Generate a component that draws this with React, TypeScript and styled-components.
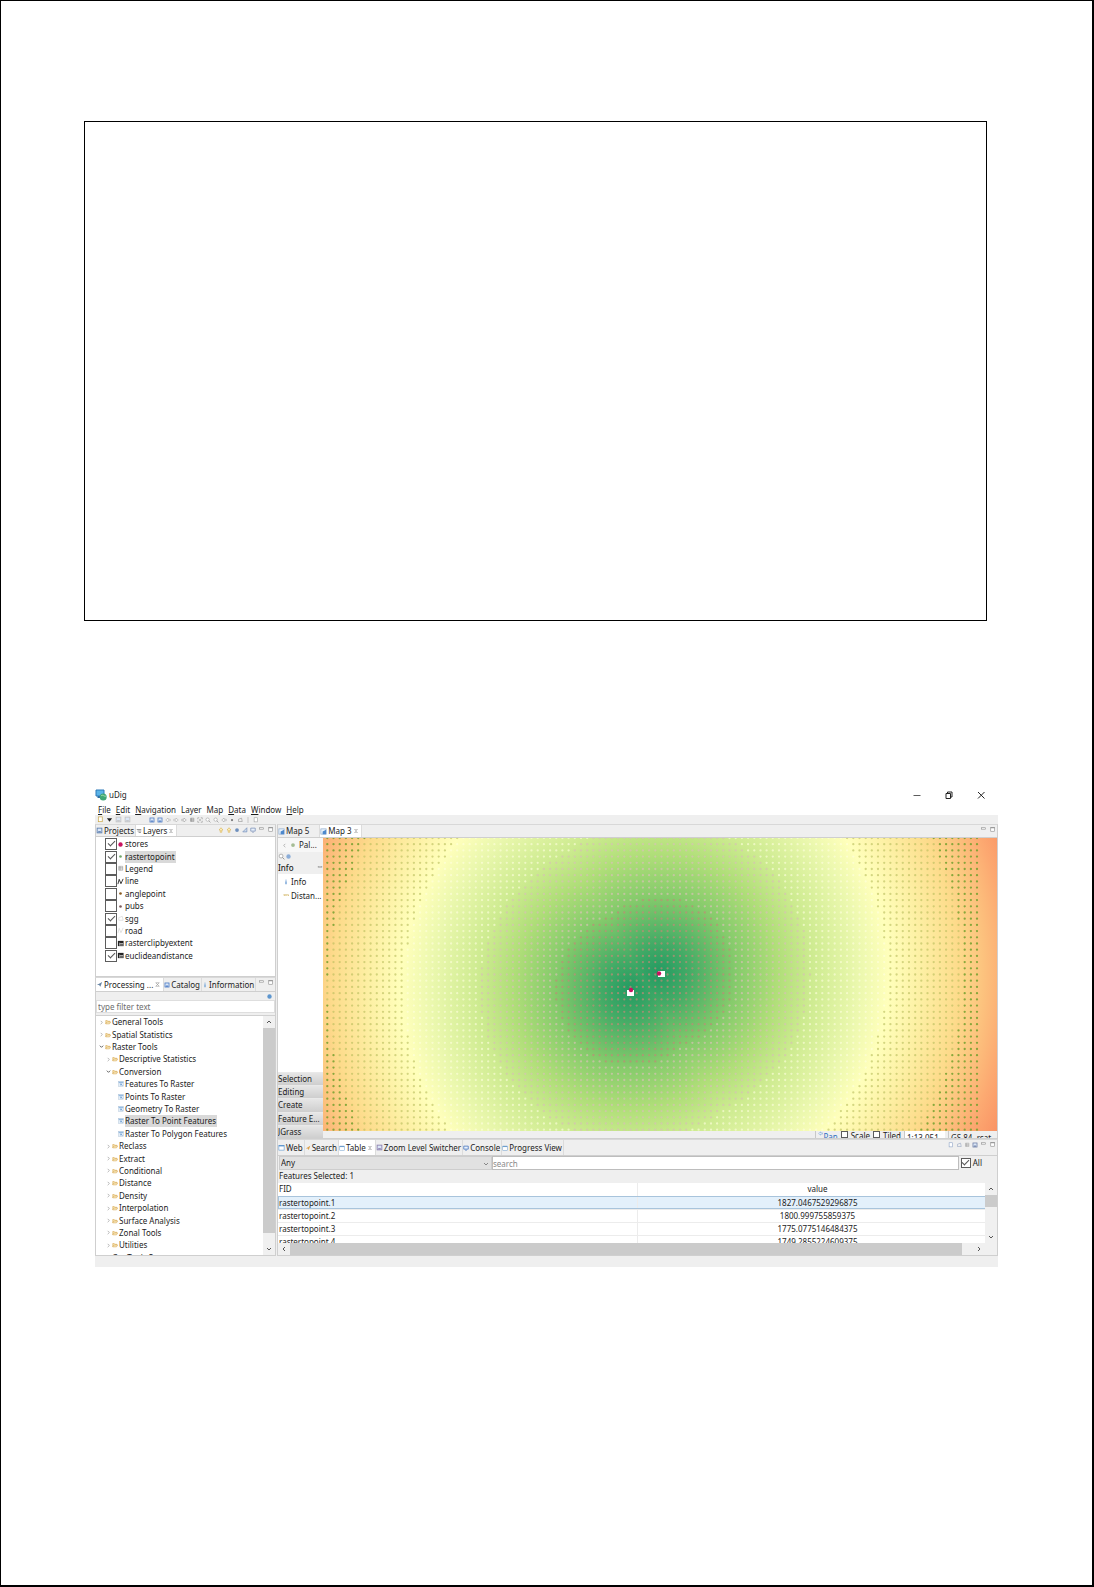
import React from "react";
import styled, { createGlobalStyle, css } from "styled-components";

const GlobalStyle = createGlobalStyle`
  *, *::before, *::after { box-sizing: border-box; }
  body { margin: 0; background: #fff; }
  body, button, input, select, table {
    font-family: "Noto Sans", "Open Sans", sans-serif;
    font-size: 8px;
    line-height: 12px;
    color: #1c1c1c;
  }
  button { padding: 0; border: 0; background: none; text-align: left; }
  ul { margin: 0; padding: 0; list-style: none; }
`;

const line = "#cfcfcf";
const chrome = "#efefef";

/* ---------- page ---------- */

const Sheet = styled.main`
  min-height: 100vh;
  padding: 120px 94px 60px;
  border: solid #000;
  border-width: 1px 2px 2px 1px;
  background: #fff;
`;

const EmptyBox = styled.section`
  height: 500px;
  margin: 0 11px 164px -11px;
  border: 1px solid #000;
`;

const Window = styled.section`
  display: flex;
  flex-direction: column;
`;

const TitleBar = styled.header`
  display: flex;
  align-items: center;
  height: 19px;
  gap: 2px;
`;

const WindowButtons = styled.div`
  display: flex;
  gap: 24px;
  margin-left: auto;
  padding-right: 13px;
  button { display: flex; }
`;

const MenuBar = styled.nav`
  display: flex;
  align-items: center;
  gap: 5px;
  height: 11px;
  padding-left: 3px;
`;

const ToolBar = styled.div`
  display: flex;
  align-items: center;
  gap: 2px;
  height: 9px;
  padding-left: 2px;
  background: ${chrome};
`;

const ToolGap = styled.span`
  width: 14px;
`;

const Workbench = styled.div`
  display: grid;
  grid-template-columns: 181px minmax(0, 1fr);
  column-gap: 1px;
  background: ${chrome};
`;

const Column = styled.div`
  display: flex;
  flex-direction: column;
  min-width: 0;
`;

const Panel = styled.section<{ $height: number }>`
  display: flex;
  flex-direction: column;
  height: ${(p) => p.$height}px;
  border: 1px solid ${line};
  border-top-color: #d8d8d8;
  overflow: hidden;
`;

const TabStrip = styled.div<{ $height: number }>`
  display: flex;
  flex: none;
  height: ${(p) => p.$height}px;
  background: ${chrome};
  border-bottom: 1px solid ${line};
`;

const Tab = styled.button<{ $active?: boolean }>`
  display: flex;
  align-items: center;
  flex: none;
  gap: 1px;
  padding: 0 1px 0 0;
  white-space: nowrap;
  border-right: 1px solid #dcdcdc;
  ${(p) => p.$active && css`background: #fff; padding-right: 2px;`}
`;

const Actions = styled.div`
  display: flex;
  gap: 2px;
  height: 9px;
  align-items: center;
  margin-left: auto;
  padding-right: 1px;
`;

const StatusBar = styled.footer`
  height: 11px;
  background: ${chrome};
`;

/* ---------- layers ---------- */

const LayerList = styled.ul`
  display: grid;
  grid-auto-rows: 1fr;
  height: 124px;
`;

const LayerPane = styled.div`
  flex: 1;
  padding-top: 1px;
  background: #fff;
`;

const Layer = styled.li`
  display: flex;
  align-items: center;
  padding-left: 9px;
  label { display: flex; align-items: center; line-height: 12px; }
`;

const LayerName = styled.span<{ $selected?: boolean }>`
  padding-right: 1px;
  margin-left: 1px;
  background: ${(p) => (p.$selected ? "#d9d9d9" : "none")};
`;

const Check = styled.input<{ $size: number }>`
  appearance: none;
  flex: none;
  display: grid;
  place-items: center;
  width: ${(p) => p.$size}px;
  height: ${(p) => p.$size}px;
  margin: 0;
  border: 1px solid #5c5c5c;
  background: #fff;
  &:checked::after {
    content: "";
    width: 7px;
    height: 4px;
    border: solid #555;
    border-width: 0 0 1px 1px;
    transform: rotate(-45deg) translate(1px, -1px);
  }
`;

/* ---------- processing tree ---------- */

const FilterBar = styled.div`
  display: flex;
  flex: none;
  align-items: center;
  justify-content: flex-end;
  height: 8px;
  padding-right: 2px;
`;

const FilterInput = styled.input`
  flex: none;
  height: 13px;
  margin-bottom: 2px;
  padding: 0 1px;
  border: 1px solid #dedede;
  background: #fff;
  &::placeholder { color: #6d6d6d; }
`;

const TreePane = styled.div`
  display: flex;
  flex: 1;
  min-height: 0;
  border-top: 1px solid #d0d0d0;
  background: #fff;
`;

const TreeClip = styled.div`
  flex: 1;
  min-width: 0;
  overflow: hidden;
`;

const Tree = styled.ul`
  display: grid;
  grid-auto-rows: 1fr;
  height: 248px;
`;

const TreeRow = styled.li<{ $depth: number }>`
  display: flex;
  align-items: center;
  gap: 1px;
  padding-left: ${(p) => [3, 10, 22][p.$depth]}px;
  white-space: nowrap;
`;

const TreeLabel = styled.span<{ $selected?: boolean }>`
  padding-right: 1px;
  background: ${(p) => (p.$selected ? "#d9d9d9" : "none")};
`;

const Scrollbar = styled.div<{ $horizontal?: boolean }>`
  display: flex;
  flex: none;
  align-items: center;
  background: #f0f0f0;
  ${(p) =>
    p.$horizontal
      ? css`height: 12px; button { width: 12px; }`
      : css`flex-direction: column; width: 12px; button { height: 12px; }`}
  button { display: grid; place-items: center; flex: none; }
`;

const Thumb = styled.div<{ $length?: string }>`
  align-self: stretch;
  flex: ${(p) => (p.$length ? `0 0 ${p.$length}` : "1")};
  background: #cbcbcb;
`;

const Spacer = styled.div<{ $size?: string }>`
  flex: ${(p) => (p.$size ? `0 0 ${p.$size}` : "1")};
`;

/* ---------- editor ---------- */

const Editor = styled.div`
  display: grid;
  grid-template-columns: 45px minmax(0, 1fr);
  flex: 1;
  min-height: 0;
`;

const Palette = styled.aside`
  display: flex;
  flex-direction: column;
  min-width: 0;
  background: #fff;
  white-space: nowrap;
`;

const PaletteHead = styled.div`
  display: flex;
  align-items: center;
  gap: 3px;
  height: 14px;
  padding-left: 4px;
  background: #f7f7f7;
`;

const PaletteTools = styled.div`
  display: flex;
  align-items: center;
  height: 9px;
  background: ${chrome};
`;

const PaletteGroup = styled.button`
  display: flex;
  align-items: center;
  justify-content: space-between;
  height: 13px;
  margin-bottom: 1px;
  font-weight: 500;
  background: ${chrome};
`;

const PaletteItem = styled.button`
  display: flex;
  align-items: center;
  gap: 2px;
  height: 14px;
  padding-left: 5px;
`;

const Drawers = styled.div`
  display: grid;
  grid-auto-rows: 1fr;
  height: 66px;
  margin-top: auto;
  button {
    border-top: 1px solid #e9e9e9;
    background: linear-gradient(#e6e6e6, #cecece);
  }
`;

const MapColumn = styled.div`
  display: flex;
  flex-direction: column;
  min-width: 0;
`;

const MapSvg = styled.svg`
  display: block;
  width: 100%;
  height: 293px;
`;

const MapStatus = styled.div`
  display: flex;
  justify-content: flex-end;
  gap: 3px;
  height: 7px;
  overflow: hidden;
  background: ${chrome};
  white-space: nowrap;
  label { display: flex; gap: 3px; line-height: 9px; }
`;

const StatusCell = styled.span<{ $width: number; $white?: boolean }>`
  flex: none;
  width: ${(p) => p.$width}px;
  padding: 1px 2px 0;
  border-left: 1px solid #c8c8c8;
  background: ${(p) => (p.$white ? "#fff" : "none")};
  overflow: hidden;
`;

const PanLink = styled.a`
  display: flex;
  padding-left: 2px;
  border-left: 1px solid #c8c8c8;
  color: #2f6fc0;
  text-decoration: none;
`;

/* ---------- feature table ---------- */

const QueryRow = styled.div`
  display: flex;
  align-items: center;
  height: 14px;
  flex: none;
  padding-left: 1px;
  > label { display: flex; align-items: center; gap: 2px; padding: 0 15px 0 2px; }
`;

const SelectBox = styled.div`
  position: relative;
  flex: 0 1 213px;
  svg { position: absolute; right: 3px; top: 5px; }
  select {
    appearance: none;
    display: block;
    width: 100%;
    height: 14px;
    padding: 0 1px;
    border: 1px solid #cdcdcd;
    border-radius: 0;
    background: #e1e1e1;
  }
`;

const SearchInput = styled.input`
  flex: 1;
  min-width: 0;
  height: 14px;
  padding: 0;
  border: 1px solid #bdbdbd;
  background: #fff;
  &::placeholder { color: #8a8a8a; }
`;

const Selected = styled.p`
  flex: none;
  height: 13px;
  margin: 0;
  padding: 0 1px;
`;

const TableArea = styled.div`
  display: flex;
  flex: 1;
  min-height: 0;
`;

const TableClip = styled.div`
  flex: 1;
  min-width: 0;
  overflow: hidden;
  background: #fff;
`;

const FeatureTable = styled.table`
  width: calc(100% + 12px);
  table-layout: fixed;
  border-collapse: collapse;
  th, td {
    height: 13px;
    padding: 0 1px;
    line-height: 12px;
    font-weight: 400;
    text-align: center;
    border-bottom: 1px solid #ececec;
  }
  th:first-child, td:first-child { text-align: left; border-right: 1px solid #ececec; }
`;

const FeatureRow = styled.tr<{ $selected?: boolean }>`
  ${(p) =>
    p.$selected &&
    css`
      background: #e3f0fb;
      outline: 1px solid #a8c4dc;
      outline-offset: -1px;
    `}
`;

/* ---------- small drawings ---------- */

type GlyphKind =
  | "view" | "stack" | "map" | "close" | "min" | "max" | "left" | "right" | "zoom"
  | "folder" | "tool" | "dot" | "pin" | "grid" | "line" | "poly" | "raster" | "extent"
  | "save" | "page" | "down" | "info" | "ruler" | "flash" | "console" | "arrowUp" | "split" | "filter";

const shapes: Record<GlyphKind, (c: string) => React.ReactNode> = {
  view: (c) => <><rect x="1" y="1.5" width="6" height="5.5" fill="#fff" stroke={c} strokeWidth="0.7" /><path d="M1 2h6" stroke={c} strokeWidth="1.5" /></>,
  stack: (c) => <path d="M1 2h6M2 4h5M3.500 6h3" stroke={c} strokeWidth="1" />,
  map: (c) => <><rect x="1" y="1" width="6" height="6" fill="#eaf2fb" stroke="#8ba9cc" strokeWidth="0.8" /><path d="M3 7V4l4-2v5z" fill={c} /></>,
  close: (c) => <path d="M2 2l4 4M6 2L2 6M2 2h4M2 6h4" stroke={c} strokeWidth="0.6" />,
  min: (c) => <rect x="1.500" y="2" width="5" height="1.600" fill="#fff" stroke={c} strokeWidth="0.7" />,
  max: (c) => <><rect x="2" y="1.500" width="4.500" height="4.500" fill="#fff" stroke={c} strokeWidth="0.7" /><path d="M2 2h4.500" stroke={c} /></>,
  left: (c) => <path d="M1 4l3-2.500v1.500h3v2H4v1.500z" fill="#fff" stroke={c} strokeWidth="0.7" />,
  right: (c) => <path d="M7 4L4 1.500v1.500H1v2h3v1.500z" fill="#fff" stroke={c} strokeWidth="0.7" />,
  zoom: (c) => <><circle cx="3.500" cy="3.500" r="2.200" fill="#fff" stroke={c} strokeWidth="0.7" /><path d="M5 5l2.300 2.300" stroke={c} /></>,
  folder: (c) => <><path d="M1 6.500V2h2l1 1h2.500v1" fill="#f7e3ad" stroke={c} strokeWidth="0.7" /><path d="M1 6.500L2.500 4h5L6 6.500z" fill="#fbeec6" stroke={c} strokeWidth="0.7" /></>,
  tool: (c) => <><rect x="1" y="1" width="6" height="6" fill="#e4eef8" stroke="#a9bfd6" strokeWidth="0.6" /><path d="M1 1.700h6M2.500 3.500L6 6M3 5.500l2.500-2" stroke={c} strokeWidth="1" /></>,
  dot: (c) => <circle cx="4" cy="4" r="1.500" fill={c} />,
  pin: (c) => <circle cx="4" cy="4" r="2.500" fill={c} />,
  grid: (c) => <path d="M2 1.500h4.500v4.500H2zM2 3h4.500M2 4.500h4.500M3.500 1.500v4.500" fill="none" stroke={c} strokeWidth="0.5" />,
  line: (c) => <path d="M1 7L2.500 1.500 4.500 6.500 7 1" fill="none" stroke={c} strokeWidth="1" />,
  poly: (c) => <path d="M2 3l4-1.500 1 4.500H2z" fill="none" stroke={c} strokeWidth="0.6" />,
  raster: (c) => <><rect x="1" y="1" width="6.500" height="6" fill={c} /><path d="M3.500 4H7M3.500 5.700H7M3 3v3.500" stroke="#fff" strokeWidth="0.7" /></>,
  extent: (c) => <path d="M1 3V1h2M5 1h2v2M7 5v2H5M3 7H1V5M3 3l2 2M5 3L3 5" fill="none" stroke={c} strokeWidth="0.7" />,
  save: (c) => <><rect x="1.300" y="1.300" width="5.400" height="5.400" fill="#dbe7f7" stroke={c} strokeWidth="1" /><path d="M2.500 5.500h3" stroke={c} strokeWidth="1.500" /></>,
  page: (c) => <rect x="1.500" y="1" width="4.500" height="5.500" fill="#fff" stroke={c} strokeWidth="0.8" />,
  down: (c) => <path d="M1 2.500h6L4 6.500z" fill={c} />,
  info: (c) => <path d="M4 1v1M4 3v4" stroke={c} strokeWidth="1.500" />,
  ruler: (c) => <path d="M0.500 2.500h7v1.500M2 2.500v1M4 2.500v1" fill="none" stroke={c} strokeWidth="0.9" />,
  flash: (c) => <path d="M1 4.500L7 1 5 6.500 3.500 4.500z" fill={c} />,
  console: (c) => <path d="M1 1.500h6v4H1zM3 7h2" fill="#e8f0fb" stroke={c} strokeWidth="1" />,
  arrowUp: (c) => <path d="M4 1L1.500 4h1.500v3h2V4h1.500z" fill="#fff4c8" stroke={c} strokeWidth="0.8" />,
  split: (c) => <path d="M4 0v8" stroke={c} strokeWidth="0.6" />,
  filter: (c) => <path d="M1 6.500L6.500 1v5.500z" fill="#cfdcec" stroke={c} strokeWidth="0.8" />,
};

const GlyphSvg = styled.svg`
  display: block;
  flex: none;
`;

function Glyph({ kind, color = "#8c8c8c", size = 7 }: { kind: GlyphKind; color?: string; size?: number }) {
  return (
    <GlyphSvg width={size} height={size} viewBox="0 0 8 8" fill="none" aria-hidden="true">
      {shapes[kind](color)}
    </GlyphSvg>
  );
}

function Chevron({ turn = 0, color = "#555", size = 6 }: { turn?: number; color?: string; size?: number }) {
  return (
    <GlyphSvg width={size} height={size} viewBox="0 0 6 6" fill="none" aria-hidden="true">
      <path d="M1 4l2-2 2 2" stroke={color} strokeWidth="1" transform={`rotate(${turn} 3 3)`} />
    </GlyphSvg>
  );
}

/* ---------- data ---------- */

const menus: [string, boolean][] = [
  ["File", true], ["Edit", true], ["Navigation", true], ["Layer", false],
  ["Map", false], ["Data", true], ["Window", true], ["Help", true],
];

const tools: [GlyphKind, string][] = [
  ["save", "#4b78c0"], ["save", "#4b78c0"], ["left", "#a5a5a5"], ["right", "#a5a5a5"], ["right", "#8f8f8f"],
  ["grid", "#666"], ["extent", "#888"], ["zoom", "#989898"], ["zoom", "#989898"], ["left", "#9a9a9a"],
  ["dot", "#777"], ["poly", "#777"], ["split", "#999"], ["page", "#a0a0a0"],
];

const layers: { name: string; on: boolean; kind: GlyphKind; color: string; selected?: boolean }[] = [
  { name: "stores", on: true, kind: "pin", color: "#c8125f" },
  { name: "rastertopoint", on: true, kind: "dot", color: "#6fa668", selected: true },
  { name: "Legend", on: false, kind: "grid", color: "#777" },
  { name: "line", on: false, kind: "line", color: "#222" },
  { name: "anglepoint", on: false, kind: "dot", color: "#8a5a1e" },
  { name: "pubs", on: false, kind: "dot", color: "#7d5a5a" },
  { name: "sgg", on: true, kind: "poly", color: "#ccc" },
  { name: "road", on: false, kind: "line", color: "#ddd" },
  { name: "rasterclipbyextent", on: false, kind: "raster", color: "#222" },
  { name: "euclideandistance", on: true, kind: "raster", color: "#222" },
];

const tree: { name: string; depth: number; open?: boolean; selected?: boolean }[] = [
  { name: "General Tools", depth: 0 },
  { name: "Spatial Statistics", depth: 0 },
  { name: "Raster Tools", depth: 0, open: true },
  { name: "Descriptive Statistics", depth: 1 },
  { name: "Conversion", depth: 1, open: true },
  { name: "Features To Raster", depth: 2 },
  { name: "Points To Raster", depth: 2 },
  { name: "Geometry To Raster", depth: 2 },
  { name: "Raster To Point Features", depth: 2, selected: true },
  { name: "Raster To Polygon Features", depth: 2 },
  { name: "Reclass", depth: 1 },
  { name: "Extract", depth: 1 },
  { name: "Conditional", depth: 1 },
  { name: "Distance", depth: 1 },
  { name: "Density", depth: 1 },
  { name: "Interpolation", depth: 1 },
  { name: "Surface Analysis", depth: 1 },
  { name: "Zonal Tools", depth: 1 },
  { name: "Utilities", depth: 1 },
  { name: "GeoTools Pro", depth: 0 },
];

const features: [string, string][] = [
  ["rastertopoint.1", "1827.0467529296875"],
  ["rastertopoint.2", "1800.999755859375"],
  ["rastertopoint.3", "1775.0775146484375"],
  ["rastertopoint.4", "1749.2855224609375"],
];

/* ---------- distance map ---------- */

const MAP_W = 674;
const MAP_H = 293;
const stores = [{ x: 308, y: 152 }, { x: 336, y: 135 }];
const reach = 380;

const ramp: [number, string][] = [
  [0, "#229a62"], [30, "#43ab66"], [76, "#84ca6b"], [118, "#afde78"], [150, "#cbea8e"],
  [200, "#ebf8ae"], [230, "#ffffbb"], [262, "#fdf0a4"], [300, "#fddb8b"], [322, "#fcc57f"],
  [348, "#fca971"], [380, "#f98d61"],
];

const bands: { limit: number; color: string; opacity: number }[] = [
  { limit: 76, color: "#c08a76", opacity: 0.7 },
  { limit: 151, color: "#d6c2b4", opacity: 0.7 },
  { limit: 228, color: "#ffffe0", opacity: 0.6 },
  { limit: 304, color: "#b7bd5c", opacity: 0.6 },
  { limit: 999, color: "#73a02e", opacity: 0.85 },
];

const dotPaths = bands.map(() => "");
for (let row = 0; row < 48; row++) {
  for (let col = 0; col < 106; col++) {
    const x = 4.3 + col * 6.188;
    const y = row * 6.206;
    const d = Math.min(...stores.map((s) => Math.hypot(s.x - x, s.y - y)));
    const i = bands.findIndex((b) => d < b.limit);
    dotPaths[i] += `M${x.toFixed(1)} ${y.toFixed(1)}h0`;
  }
}

function DistanceMap() {
  const [a, b] = stores;
  const mx = (a.x + b.x) / 2;
  const my = (a.y + b.y) / 2;
  // Perpendicular bisector between the stores, extended well past the map.
  const dx = (b.y - a.y) * 30;
  const dy = -(b.x - a.x) * 30;
  const farX = (b.x - a.x) * 40;
  const farY = (b.y - a.y) * 40;
  const half = `M${mx - dx} ${my - dy}L${mx + dx} ${my + dy}L${mx + dx + farX} ${my + dy + farY}L${mx - dx + farX} ${my - dy + farY}z`;
  return (
    <MapSvg viewBox={`0 0 ${MAP_W} ${MAP_H}`} preserveAspectRatio="none" role="img" aria-label="Euclidean distance from stores">
      <defs>
        {stores.map((s, i) => (
          <radialGradient key={i} id={`store${i}`} gradientUnits="userSpaceOnUse" cx={s.x} cy={s.y} r={reach}>
            {ramp.map(([d, c]) => <stop key={d} offset={d / reach} stopColor={c} />)}
          </radialGradient>
        ))}
      </defs>
      <rect width={MAP_W} height={MAP_H} fill="url(#store0)" />
      <path d={half} fill="url(#store1)" />
      {bands.map((band, i) => (
        <path key={band.limit} d={dotPaths[i]} stroke={band.color} strokeOpacity={band.opacity} strokeWidth="2.300" strokeLinecap="round" />
      ))}
      <rect x="304" y="152" width="7" height="6" fill="#fff" />
      <circle cx="308" cy="152" r="2.200" fill="#c8125f" />
      <rect x="335" y="133" width="7" height="6" fill="#fff" />
      <circle cx="336" cy="135.500" r="2.200" fill="#c8125f" />
    </MapSvg>
  );
}

function MinMax() {
  return <><Glyph kind="min" /><Glyph kind="max" /></>;
}

export default function App() {
  return (
    <>
      <GlobalStyle />
      <Sheet>
        <EmptyBox />
        <Window>
          <TitleBar>
            <svg width="12" height="12" viewBox="0 0 12 12" aria-hidden="true">
              <path d="M1 1h8v6H1z" fill="#5ab4e8" stroke="#2d78b8" />
              <path d="M2.500 7h3l1 2h-4z" fill="#2d6da8" />
              <circle cx="8.200" cy="8" r="3.500" fill="#3fa774" />
              <path d="M6 7c2-2 3 1 5 0" stroke="#a6dfb0" fill="none" />
            </svg>
            <span>uDig</span>
            <WindowButtons>
              <button aria-label="Minimize">
                <svg width="8" height="8" viewBox="0 0 8 8"><path d="M0.500 4.500h7" stroke="#333" strokeWidth="0.800" /></svg>
              </button>
              <button aria-label="Restore">
                <svg width="8" height="8" viewBox="0 0 8 8" fill="none" stroke="#222"><path d="M1 2.500h4.500v5H1zM2.500 2.500V1H7v5H5.500" /></svg>
              </button>
              <button aria-label="Close">
                <svg width="8" height="8" viewBox="0 0 8 8"><path d="M1 1l6.500 6.500M7.500 1L1 7.500" stroke="#222" /></svg>
              </button>
            </WindowButtons>
          </TitleBar>
          <MenuBar>
            {menus.map(([name, key]) => (
              <button key={name}>{key ? <><u>{name[0]}</u>{name.slice(1)}</> : name}</button>
            ))}
          </MenuBar>
          <ToolBar>
            <Glyph kind="page" color="#c9a545" />
            <Glyph kind="down" color="#222" />
            <Glyph kind="save" color="#c4c4c4" />
            <Glyph kind="save" color="#c4c4c4" />
            <ToolGap />
            {tools.map(([kind, color], i) => <Glyph key={i} kind={kind} color={color} size={6} />)}
          </ToolBar>

          <Workbench>
            <Column>
              <Panel $height={153}>
                <TabStrip $height={12}>
                  <Tab><Glyph kind="save" color="#5d7fb0" />Projects</Tab>
                  <Tab $active><Glyph kind="stack" color="#777" size={6} />Layers<Glyph kind="close" size={6} /></Tab>
                  <Actions>
                    <Glyph kind="arrowUp" color="#d9ae45" size={6} />
                    <Glyph kind="arrowUp" color="#d9ae45" size={6} />
                    <Glyph kind="pin" color="#6d8fbd" size={6} />
                    <Glyph kind="filter" color="#6684b5" size={6} />
                    <Glyph kind="console" color="#7a8fb5" size={6} />
                    <MinMax />
                  </Actions>
                </TabStrip>
                <LayerPane>
                  <LayerList>
                    {layers.map((l) => (
                      <Layer key={l.name}>
                        <label>
                          <Check type="checkbox" $size={12} defaultChecked={l.on} />
                          <Glyph kind={l.kind} color={l.color} />
                          <LayerName $selected={l.selected}>{l.name}</LayerName>
                        </label>
                      </Layer>
                    ))}
                  </LayerList>
                </LayerPane>
              </Panel>
              <Panel $height={279}>
                <TabStrip $height={14}>
                  <Tab $active><Glyph kind="flash" color="#6684a5" />Processing ...<Glyph kind="close" /></Tab>
                  <Tab><Glyph kind="save" color="#3f72c0" size={6} />Catalog</Tab>
                  <Tab><Glyph kind="info" color="#5d96cf" size={6} />Information</Tab>
                  <Actions><MinMax /></Actions>
                </TabStrip>
                <FilterBar><Glyph kind="pin" color="#5d96cf" /></FilterBar>
                <FilterInput placeholder="type filter text" aria-label="Filter tools" />
                <TreePane>
                  <TreeClip>
                    <Tree>
                      {tree.map((t) => (
                        <TreeRow key={t.name} $depth={t.depth}>
                          {t.depth < 2 && <Chevron turn={t.open ? 180 : 90} color={t.open ? "#444" : "#aaa"} size={5} />}
                          <Glyph kind={t.depth < 2 ? "folder" : "tool"} color={t.depth < 2 ? "#d3a24a" : "#5d96cf"} size={6} />
                          <TreeLabel $selected={t.selected}>{t.name}</TreeLabel>
                        </TreeRow>
                      ))}
                    </Tree>
                  </TreeClip>
                  <Scrollbar>
                    <button aria-label="Scroll up"><Chevron /></button>
                    <Thumb />
                    <Spacer $size="10px" />
                    <button aria-label="Scroll down"><Chevron turn={180} /></button>
                  </Scrollbar>
                </TreePane>
              </Panel>
            </Column>

            <Column>
              <Panel $height={315}>
                <TabStrip $height={13}>
                  <Tab><Glyph kind="map" color="#4d88cc" />Map 5<Spacer $size="8px" /></Tab>
                  <Tab $active><Glyph kind="map" color="#4d88cc" />Map 3<Glyph kind="close" size={6} /></Tab>
                  <Actions><MinMax /></Actions>
                </TabStrip>
                <Editor>
                  <Palette>
                    <PaletteHead>
                      <Chevron turn={-90} color="#aaa" size={5} />
                      <Glyph kind="pin" color="#a4bc94" size={6} />
                      Pal...
                    </PaletteHead>
                    <PaletteTools><Glyph kind="zoom" /><Glyph kind="pin" color="#8badd8" /></PaletteTools>
                    <PaletteGroup>Info<Glyph kind="min" size={6} /></PaletteGroup>
                    <PaletteItem><Glyph kind="info" color="#4d88cc" size={6} />Info</PaletteItem>
                    <PaletteItem><Glyph kind="ruler" color="#c9a545" size={6} />Distan...</PaletteItem>
                    <Drawers>
                      {["Selection", "Editing", "Create", "Feature E...", "JGrass"].map((d) => <button key={d}>{d}</button>)}
                    </Drawers>
                  </Palette>
                  <MapColumn>
                    <DistanceMap />
                    <MapStatus>
                      <PanLink href="#pan"><Glyph kind="left" color="#4d88cc" size={5} />Pan</PanLink>
                      <label><Check type="checkbox" $size={7} />Scale</label>
                      <label><Check type="checkbox" $size={7} />Tiled</label>
                      <StatusCell $width={41} $white>1:13,051</StatusCell>
                      <StatusCell $width={49}>GS 84, rcat</StatusCell>
                    </MapStatus>
                  </MapColumn>
                </Editor>
              </Panel>
              <Panel $height={117}>
                <TabStrip $height={16}>
                  <Tab><Glyph kind="view" color="#5d96cf" />Web</Tab>
                  <Tab><Glyph kind="flash" color="#dba04c" size={6} />Search</Tab>
                  <Tab $active><Glyph kind="view" color="#6f9fcc" size={6} />Table<Glyph kind="close" size={6} /></Tab>
                  <Tab><Glyph kind="save" color="#8b7fae" />Zoom Level Switcher</Tab>
                  <Tab><Glyph kind="console" color="#3f6fbb" size={6} />Console</Tab>
                  <Tab><Glyph kind="view" color="#6f9fcc" size={6} />Progress View</Tab>
                  <Actions>
                    <Glyph kind="page" color="#8ea4c6" size={6} />
                    <Glyph kind="poly" color="#7a8fb5" size={6} />
                    <Glyph kind="grid" color="#888" size={6} />
                    <Glyph kind="save" color="#6a7ba3" size={6} />
                    <MinMax />
                  </Actions>
                </TabStrip>
                <QueryRow>
                  <SelectBox>
                    <select aria-label="Attribute"><option>Any</option></select>
                    <Chevron turn={180} color="#888" />
                  </SelectBox>
                  <SearchInput placeholder="search" aria-label="Search" />
                  <label><Check type="checkbox" $size={10} defaultChecked />All</label>
                </QueryRow>
                <Selected>Features Selected: 1</Selected>
                <TableArea>
                  <TableClip>
                    <FeatureTable>
                      <thead><tr><th>FID</th><th>value</th></tr></thead>
                      <tbody>
                        {features.map(([fid, value], i) => (
                          <FeatureRow key={fid} $selected={i === 0}><td>{fid}</td><td>{value}</td></FeatureRow>
                        ))}
                      </tbody>
                    </FeatureTable>
                  </TableClip>
                  <Scrollbar>
                    <button aria-label="Scroll up"><Chevron /></button>
                    <Thumb $length="12px" />
                    <Spacer />
                    <button aria-label="Scroll down"><Chevron turn={180} /></button>
                  </Scrollbar>
                </TableArea>
                <Scrollbar $horizontal>
                  <button aria-label="Scroll left"><Chevron turn={-90} /></button>
                  <Thumb />
                  <Spacer $size="11px" />
                  <button aria-label="Scroll right"><Chevron turn={90} /></button>
                  <Spacer $size="12px" />
                </Scrollbar>
              </Panel>
            </Column>
          </Workbench>
          <StatusBar />
        </Window>
      </Sheet>
    </>
  );
}
